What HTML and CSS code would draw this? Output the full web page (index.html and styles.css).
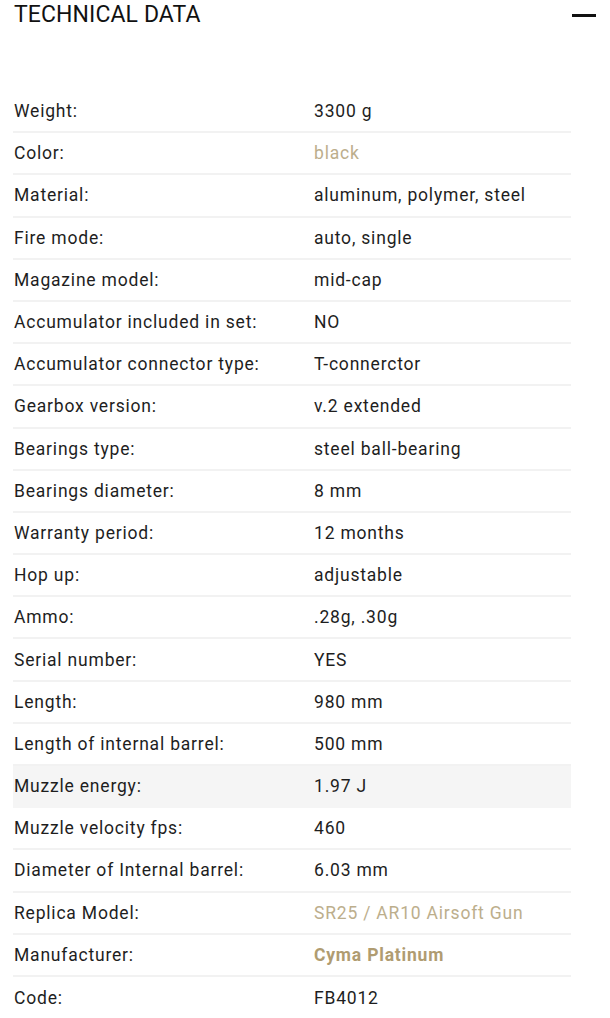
FILE: index.html
```html
<!DOCTYPE html>
<html lang="en">
<head>
<meta charset="utf-8">
<link rel="stylesheet" href="styles.css">
</head>
<body>
<div class="page">
  <div class="head">
    <h2 class="title">TECHNICAL DATA</h2>
    <span class="minus"></span>
  </div>
  <div class="table">
    <div class="row"><span class="k">Weight:</span><span class="v">3300 g</span></div>
    <div class="row"><span class="k">Color:</span><span class="v gold-light">black</span></div>
    <div class="row"><span class="k">Material:</span><span class="v">aluminum, polymer, steel</span></div>
    <div class="row"><span class="k">Fire mode:</span><span class="v">auto, single</span></div>
    <div class="row"><span class="k">Magazine model:</span><span class="v">mid-cap</span></div>
    <div class="row"><span class="k">Accumulator included in set:</span><span class="v">NO</span></div>
    <div class="row"><span class="k">Accumulator connector type:</span><span class="v">T-connerctor</span></div>
    <div class="row"><span class="k">Gearbox version:</span><span class="v">v.2 extended</span></div>
    <div class="row"><span class="k">Bearings type:</span><span class="v">steel ball-bearing</span></div>
    <div class="row"><span class="k">Bearings diameter:</span><span class="v">8 mm</span></div>
    <div class="row"><span class="k">Warranty period:</span><span class="v">12 months</span></div>
    <div class="row"><span class="k">Hop up:</span><span class="v">adjustable</span></div>
    <div class="row"><span class="k">Ammo:</span><span class="v">.28g, .30g</span></div>
    <div class="row"><span class="k">Serial number:</span><span class="v">YES</span></div>
    <div class="row"><span class="k">Length:</span><span class="v">980 mm</span></div>
    <div class="row"><span class="k">Length of internal barrel:</span><span class="v">500 mm</span></div>
    <div class="row hl"><span class="k">Muzzle energy:</span><span class="v">1.97 J</span></div>
    <div class="row"><span class="k">Muzzle velocity fps:</span><span class="v">460</span></div>
    <div class="row"><span class="k">Diameter of Internal barrel:</span><span class="v">6.03 mm</span></div>
    <div class="row"><span class="k">Replica Model:</span><span class="v gold-light">SR25 / AR10 Airsoft Gun</span></div>
    <div class="row"><span class="k">Manufacturer:</span><span class="v gold-bold">Cyma Platinum</span></div>
    <div class="row last"><span class="k">Code:</span><span class="v">FB4012</span></div>
  </div>
</div>
</body>
</html>
```

FILE: styles.css
```css
html, body {
  margin: 0;
  padding: 0;
  background: #ffffff;
}
.page {
  width: 610px;
  font-family: Roboto, "Noto Sans", sans-serif;
  color: #1e1e1e;
}
.head {
  display: flex;
  align-items: center;
  justify-content: space-between;
  height: 30px;
  padding: 0 14px 0 14px;
}
.title {
  margin: 0;
  font-family: Roboto, sans-serif;
  font-weight: 400;
  font-size: 23px;
  line-height: 30px;
  letter-spacing: 0.1px;
  color: #111;
}
.minus {
  width: 24px;
  height: 3px;
  background: #111;
}
.table {
  margin: 61px 39px 0 13px;
}
.row {
  display: flex;
  align-items: center;
  height: 42.2px;
  box-sizing: border-box;
  border-bottom: 2px solid #f2f2f2;
  font-size: 17.5px;
  letter-spacing: 0.8px;
}
.row.hl {
  background: #f5f5f5;
  border-bottom-color: #f5f5f5;
}
.row.last {
  border-bottom: none;
}
.k {
  width: 300px;
  padding-left: 1px;
}
.v {
  flex: 1;
}
.gold-light {
  color: #bcae8c;
}
.gold-bold {
  color: #b09c71;
  font-weight: 700;
}
```
